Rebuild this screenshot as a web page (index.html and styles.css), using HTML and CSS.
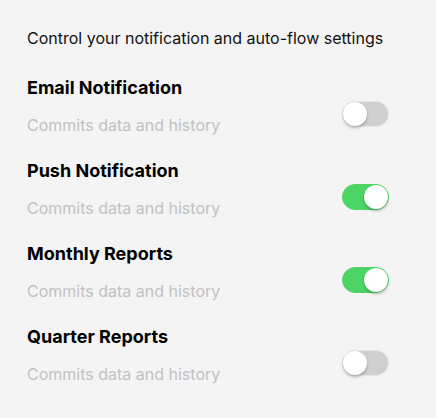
FILE: index.html
```html
<!DOCTYPE html>
<html>
<head>
<meta charset="utf-8">
<link rel="stylesheet" href="styles.css">
</head>
<body>
<div class="panel">
  <p class="intro">Control your notification and auto-flow settings</p>
  <ul class="list">
    <li class="row">
      <div class="text">
        <div class="title">Email Notification</div>
        <div class="sub">Commits data and history</div>
      </div>
      <span class="switch"><span class="knob"></span></span>
    </li>
    <li class="row">
      <div class="text">
        <div class="title">Push Notification</div>
        <div class="sub">Commits data and history</div>
      </div>
      <span class="switch on"><span class="knob"></span></span>
    </li>
    <li class="row">
      <div class="text">
        <div class="title">Monthly Reports</div>
        <div class="sub">Commits data and history</div>
      </div>
      <span class="switch on"><span class="knob"></span></span>
    </li>
    <li class="row">
      <div class="text">
        <div class="title">Quarter Reports</div>
        <div class="sub">Commits data and history</div>
      </div>
      <span class="switch"><span class="knob"></span></span>
    </li>
  </ul>
</div>
</body>
</html>
```
FILE: styles.css
```css
html, body {
  margin: 0;
  padding: 0;
  background: #f4f4f4;
}
body {
  font-family: Inter, "Noto Sans", sans-serif;
  color: #111;
}
.panel {
  padding: 28px 47px 0 27px;
}
.intro {
  margin: 0;
  font-size: 16px;
  line-height: 20px;
  color: #111;
}
.list {
  list-style: none;
  margin: 29px 0 0;
  padding: 0;
  display: flex;
  flex-direction: column;
  gap: 25px;
}
.row {
  display: flex;
  justify-content: space-between;
  align-items: flex-start;
}
.text {
  display: flex;
  flex-direction: column;
  gap: 16px;
}
.title {
  font-size: 18px;
  font-weight: 700;
  line-height: 22px;
  color: #000;
}
.sub {
  font-size: 16px;
  line-height: 20px;
  color: #c2c2c2;
}
.switch {
  display: flex;
  align-items: center;
  width: 47px;
  height: 26px;
  box-sizing: border-box;
  border-radius: 13px;
  background: #cfcfcf;
  border: 1px solid #e6e6e6;
  margin-top: 24px;
}
.switch .knob {
  width: 24px;
  height: 24px;
  border-radius: 50%;
  background: #fff;
  box-shadow: 0 2px 3px rgba(0,0,0,0.25);
}
.switch.on {
  background: #4cd465;
  border-color: #4cd465;
  justify-content: flex-end;
}
```
